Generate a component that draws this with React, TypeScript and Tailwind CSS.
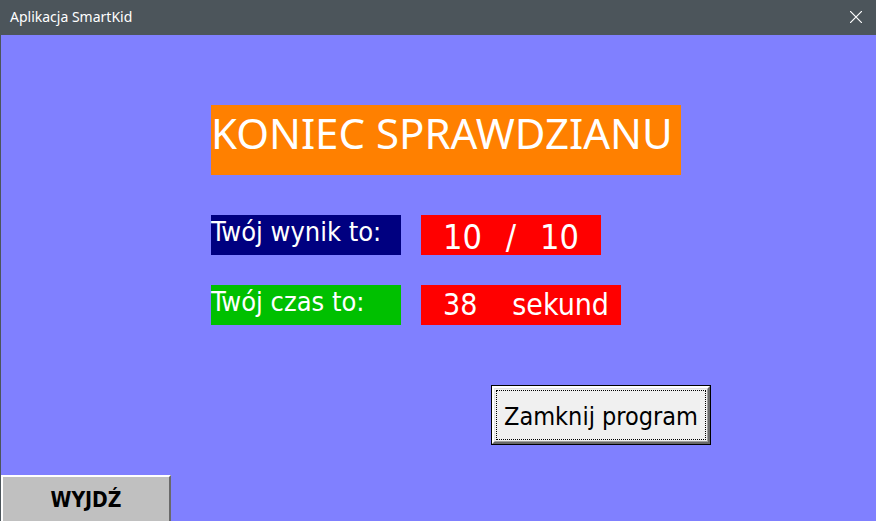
export default function App() {
  return (
    <div className="flex min-h-screen flex-col bg-[#8080ff] font-['DejaVu_Sans_Condensed','DejaVu_Sans',sans-serif] text-white">
      <header className="flex h-[35px] shrink-0 items-center justify-between bg-[#4c555b] pr-3.5 pb-0.5 pl-2.5">
        <h1 className="font-['Noto_Sans',sans-serif] text-sm">Aplikacja SmartKid</h1>
        <button type="button" aria-label="Zamknij" className="flex items-center justify-center">
          <svg viewBox="0 0 12 12" className="size-3" fill="none" stroke="white" strokeWidth="1.2">
            <path d="M0 0 12 12M12 0 0 12" />
          </svg>
        </button>
      </header>
      <div className="flex grow flex-col justify-between border-l border-[#4c555b]">
        <main className="flex flex-col items-start pt-[70px] pl-[210px]">
          <h2 className="h-[70px] w-[470px] bg-[#ff8000] font-['Noto_Sans',sans-serif] text-[42px] leading-[56px] whitespace-nowrap">
            KONIEC SPRAWDZIANU
          </h2>
          <div className="mt-10 flex gap-5 whitespace-nowrap">
            <div className="h-10 w-[190px] bg-[#000080] text-[27px] leading-[34px]">Twój wynik to:</div>
            <div className="flex h-10 w-[180px] justify-between bg-[#ff0000] px-[22px] text-[34px] leading-[44px]">
              <span>10</span>
              <span>/</span>
              <span>10</span>
            </div>
          </div>
          <div className="mt-[30px] flex gap-5 whitespace-nowrap">
            <div className="h-10 w-[190px] bg-[#00c000] text-[27px] leading-[34px]">Twój czas to:</div>
            <div className="flex h-10 w-[200px] justify-between bg-[#ff0000] pr-3 pl-[22px] text-[30px] leading-10">
              <span>38</span>
              <span>sekund</span>
            </div>
          </div>
          <button type="button" className="mt-[60px] ml-[280px] h-[60px] w-[220px] border border-black text-black">
            <span className="block h-full border-t-2 border-r-2 border-b-2 border-l-2 border-t-white border-r-[#696969] border-b-[#696969] border-l-white">
              <span className="block h-full border border-t-[#e3e3e3] border-r-[#a0a0a0] border-b-[#a0a0a0] border-l-[#e3e3e3] bg-[#f0f0f0] p-px">
                <span className="flex h-full items-center justify-center border border-dotted border-black pt-1 text-[25px] whitespace-nowrap">
                  Zamknij program
                </span>
              </span>
            </span>
          </button>
        </main>
        <footer className="flex">
          <button
            type="button"
            className="h-[46px] w-[170px] border-t-2 border-r-2 border-l-2 border-t-white border-r-[#696969] border-l-white bg-[#c0c0c0] pt-1 text-[21px] font-bold text-black"
          >
            WYJDŹ
          </button>
        </footer>
      </div>
    </div>
  );
}
